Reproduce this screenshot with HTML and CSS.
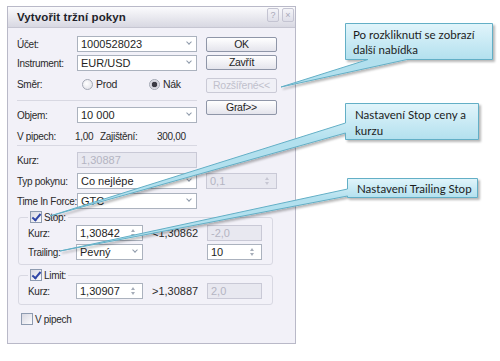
FILE: index.html
```html
<!DOCTYPE html>
<html lang="cs">
  <head>
    <meta charset="utf-8" />
    <title>Vytvořit tržní pokyn</title>
    <link rel="stylesheet" href="styles.css">
  </head>
  <body>
    <div class="screen">
      <div class="dialog">
        <div class="titlebar">
          <span class="title">Vytvořit tržní pokyn</span>
          <span class="tb-btns">
            <span class="tb-btn">?</span>
            <span class="tb-btn">×</span>
          </span>
        </div>
        <div class="body">
          <div class="top">
            <div class="fields">
              <div class="row">
                <label>Účet:</label>
                <div class="combo">1000528023<i class="chev"></i></div>
              </div>
              <div class="row r-instr">
                <label>Instrument:</label>
                <div class="combo">EUR/USD<i class="chev"></i></div>
              </div>
              <div class="row r-smer">
                <label>Směr:</label>
                <span class="radio"></span><span class="rlabel">Prod</span>
                <span class="radio on"></span><span class="rlabel">Nák</span>
              </div>
              <div class="sep s1"></div>
              <div class="row r-objem">
                <label>Objem:</label>
                <div class="combo">10 000<i class="chev"></i></div>
              </div>
              <div class="row r-pips">
                <span class="p-lbl">V pipech:</span>
                <span class="p-val">1,00</span>
                <span class="p-lbl2">Zajištění:</span>
                <span>300,00</span>
              </div>
              <div class="sep s2"></div>
              <div class="row r-kurz">
                <label>Kurz:</label>
                <div class="combo disabled">1,30887</div>
              </div>
            </div>
            <div class="buttons">
              <div class="btn b-ok">OK</div>
              <div class="btn b-close">Zavřít</div>
              <div class="btn b-more disabled">Rozšířené&lt;&lt;</div>
              <div class="btn b-graf">Graf&gt;&gt;</div>
            </div>
          </div>

          <div class="row r-typ">
            <label>Typ pokynu:</label>
            <div class="combo">Co nejlépe<i class="chev"></i></div>
            <div class="combo spin wide disabled">0,1<i class="arrows"></i></div>
          </div>
          <div class="row r-tif">
            <label>Time In Force:</label>
            <div class="combo">GTC<i class="chev"></i></div>
          </div>

          <fieldset class="group g-stop">
            <legend><span class="check on"></span>Stop:</legend>
            <div class="grow">
              <label>Kurz:</label>
              <div class="combo small spin">1,30842<i class="arrows"></i></div>
              <span class="hint">&lt;1,30862</span>
              <div class="combo tiny disabled">-2,0</div>
            </div>
            <div class="grow g2">
              <label>Trailing:</label>
              <div class="combo small">Pevný<i class="chev"></i></div>
              <span class="hint"></span>
              <div class="combo tiny spin">10<i class="arrows"></i></div>
            </div>
          </fieldset>

          <fieldset class="group g-limit">
            <legend><span class="check on"></span>Limit:</legend>
            <div class="grow">
              <label>Kurz:</label>
              <div class="combo small spin">1,30907<i class="arrows"></i></div>
              <span class="hint">&gt;1,30887</span>
              <div class="combo tiny disabled">2,0</div>
            </div>
          </fieldset>

          <div class="pips-check"><span class="check"></span>V pipech</div>
        </div>
      </div>

      <svg class="tails" width="500" height="361" viewBox="0 0 500 361">
        <defs>
          <linearGradient id="g1" gradientUnits="userSpaceOnUse" x1="0" y1="23" x2="0" y2="60">
            <stop offset="0" stop-color="#e2f5fb" />
            <stop offset="1" stop-color="#b2e0ee" />
          </linearGradient>
          <linearGradient id="g2" gradientUnits="userSpaceOnUse" x1="0" y1="103" x2="0" y2="140">
            <stop offset="0" stop-color="#e2f5fb" />
            <stop offset="1" stop-color="#b2e0ee" />
          </linearGradient>
          <linearGradient id="g3" gradientUnits="userSpaceOnUse" x1="0" y1="178" x2="0" y2="198">
            <stop offset="0" stop-color="#e2f5fb" />
            <stop offset="1" stop-color="#b2e0ee" />
          </linearGradient>
          <filter id="sh" x="-10%" y="-10%" width="130%" height="130%">
            <feDropShadow dx="2" dy="2" stdDeviation="1.2" flood-color="#000" flood-opacity="0.28" />
          </filter>
        </defs>
        <g class="callout" filter="url(#sh)">
          <path fill="url(#g1)" d="M345.5,23.5 H492.5 V59.5 H407 L281,87 L368,59.5 H345.5 Z" />
          <path fill="url(#g2)" d="M345.5,103.5 H478.5 V139.5 H345.5 V133 L50,216 L345.5,123 Z" />
          <path fill="url(#g3)" d="M347.5,178.5 H477.5 V197.5 H347.5 V196 L60,251 L347.5,189 Z" />
        </g>
      </svg>

      <div class="note n1">Po rozkliknutí se zobrazí<br>další nabídka</div>
      <div class="note n2">Nastavení Stop ceny a<br>kurzu</div>
      <div class="note n3">Nastavení Trailing Stop</div>
    </div>
  </body>
</html>
```

FILE: styles.css
```css
* {
  box-sizing: border-box;
}
body {
  margin: 0;
  background: #fff;
  font: 10px "Liberation Sans", Arial, sans-serif;
  letter-spacing: -0.3px;
  color: #2a2a2a;
  white-space: nowrap;
}
.screen {
  position: relative;
  width: 500px;
  height: 361px;
  overflow: hidden;
}

/* dialog */
.dialog {
  margin: 6px 0 0 7px;
  width: 289px;
  height: 338px;
  border: 1px solid #b9b9c8;
  background: #f2f1f8;
  display: flex;
  flex-direction: column;
}
.titlebar {
  height: 21px;
  flex: none;
  display: flex;
  align-items: flex-start;
  justify-content: space-between;
  padding-left: 9px;
  background: linear-gradient(#fbfbfd, #d8d8e2);
  border-bottom: 1px solid #c6c6d2;
}
.title {
  font: bold 11.5px "Liberation Sans", Arial, sans-serif;
  letter-spacing: 0.1px;
  color: #1f1f2a;
  line-height: 20px;
}
.tb-btns {
  display: flex;
  gap: 3px;
  margin: 1px 1px 0 0;
}
.tb-btn {
  width: 12px;
  height: 14px;
  border: 1px solid #c4c4d2;
  border-radius: 2px;
  background: linear-gradient(#f4f4f8, #dedee8);
  color: #a8a8b8;
  font-size: 9px;
  line-height: 12px;
  text-align: center;
  letter-spacing: 0;
}
.body {
  padding: 8px 17px 0 9px;
}
.top {
  display: flex;
  gap: 9px;
}
.fields {
  width: 180px;
}
.row {
  display: flex;
  align-items: center;
  height: 16px;
}
.row label {
  width: 60px;
  flex: none;
}
.r-instr {
  margin-top: 3px;
}
.r-smer {
  margin-top: 5px;
}
.r-objem {
  margin-top: 6px;
}
.r-pips {
  margin-top: 6px;
  height: 14px;
}
.r-kurz {
  margin-top: 6px;
}
.r-typ {
  margin-top: 5px;
}
.r-tif {
  margin-top: 4px;
}
.sep {
  height: 1px;
  background: #d8d8e2;
}
.s1 {
  margin-top: 8px;
}
.s2 {
  margin-top: 2px;
}
.p-lbl {
  width: 58px;
}
.p-val {
  width: 25px;
}
.p-lbl2 {
  width: 57px;
}

/* inputs */
.combo {
  position: relative;
  width: 120px;
  height: 16px;
  flex: none;
  border: 1px solid #abb2be;
  background: #fff;
  padding-left: 3px;
  line-height: 14px;
  font-size: 11px;
  letter-spacing: 0;
  color: #1e1e1e;
}
.combo.wide {
  width: 71px;
  margin-left: 9px;
}
.combo.small {
  width: 67px;
}
.combo.tiny {
  width: 55px;
}
.combo.disabled {
  background: #e8e8f0;
  border-color: #c9c9d6;
  color: #b4b4c2;
}
.chev {
  position: absolute;
  right: 5px;
  top: 3px;
  width: 4px;
  height: 4px;
  border-right: 1px solid #8e99aa;
  border-bottom: 1px solid #8e99aa;
  transform: rotate(45deg);
}
.arrows {
  position: absolute;
  right: 6px;
  top: 3px;
  width: 5px;
  height: 8px;
}
.arrows::before,
.arrows::after {
  content: "";
  position: absolute;
  left: 0;
  border-left: 2.5px solid transparent;
  border-right: 2.5px solid transparent;
}
.arrows::before {
  top: 0;
  border-bottom: 3px solid #a6adb9;
}
.arrows::after {
  bottom: 0;
  border-top: 3px solid #a6adb9;
}
.disabled .arrows::before {
  border-bottom-color: #c6c6d2;
}
.disabled .arrows::after {
  border-top-color: #c6c6d2;
}

/* radios and checks */
.radio {
  width: 11px;
  height: 11px;
  border: 1px solid #a3a8b4;
  border-radius: 50%;
  background: radial-gradient(circle at 40% 40%, #fff, #dcdce4);
  margin-left: 5px;
  flex: none;
}
.radio.on {
  margin-left: 32px;
  background: radial-gradient(circle, #3b3b44 0 2.5px, #c8c8d2 3px, #f4f4f8 5px);
}
.rlabel {
  margin-left: 3px;
  font-size: 10.5px;
}
.check {
  display: inline-block;
  width: 12px;
  height: 12px;
  border: 1px solid #8e9bb0;
  background: linear-gradient(135deg, #d8d8e2, #fbfbfd);
  vertical-align: -2px;
  margin-right: 2px;
  position: relative;
}
.check.on::after {
  content: "";
  position: absolute;
  left: 3px;
  top: 0;
  width: 3px;
  height: 7px;
  border-right: 2px solid #2f45a6;
  border-bottom: 2px solid #2f45a6;
  transform: rotate(40deg);
}

/* buttons */
.buttons {
  width: 71px;
  display: flex;
  flex-direction: column;
}
.btn {
  height: 15px;
  border: 1px solid #8f96a8;
  border-radius: 2px;
  background: linear-gradient(#ffffff, #e4e4ec);
  text-align: center;
  line-height: 13px;
  font-size: 10.5px;
  color: #1e1e1e;
}
.b-ok {
  margin-top: 1px;
}
.b-close {
  margin-top: 3px;
}
.b-more {
  margin-top: 8px;
}
.b-graf {
  margin-top: 7px;
}
.btn.disabled {
  border-color: #cacad6;
  background: #f0f0f6;
  color: #c0c0cc;
}

/* groups */
.group {
  margin: 2px 0 0 1px;
  width: 255px;
  border: 1px solid #d8d8e2;
  border-radius: 3px;
  padding: 1px 9px 4px 9px;
}
.group legend {
  padding: 0 2px;
  line-height: 13px;
}
.g-limit {
  margin-top: 4px;
  padding-bottom: 5px;
}
.grow {
  display: flex;
  align-items: center;
  height: 16px;
}
.grow label {
  width: 48px;
  flex: none;
}
.grow.g2 {
  margin-top: 3px;
}
.hint {
  width: 64px;
  padding-left: 9px;
  flex: none;
  font-size: 11px;
  letter-spacing: 0;
}
.pips-check {
  margin: 8px 0 0 4px;
}

/* callouts */
.tails {
  position: absolute;
  left: 0;
  top: 0;
}
.callout path {
  stroke: #63afc6;
  stroke-width: 1;
}
.note {
  position: absolute;
  font: 11.5px Lato, "Open Sans", sans-serif;
  letter-spacing: 0;
  color: #1c1c1c;
}
.n1 {
  left: 353px;
  top: 27px;
  line-height: 15px;
}
.n2 {
  left: 355px;
  top: 107px;
  line-height: 16px;
}
.n3 {
  left: 357px;
  top: 182px;
  line-height: 14px;
}
```
